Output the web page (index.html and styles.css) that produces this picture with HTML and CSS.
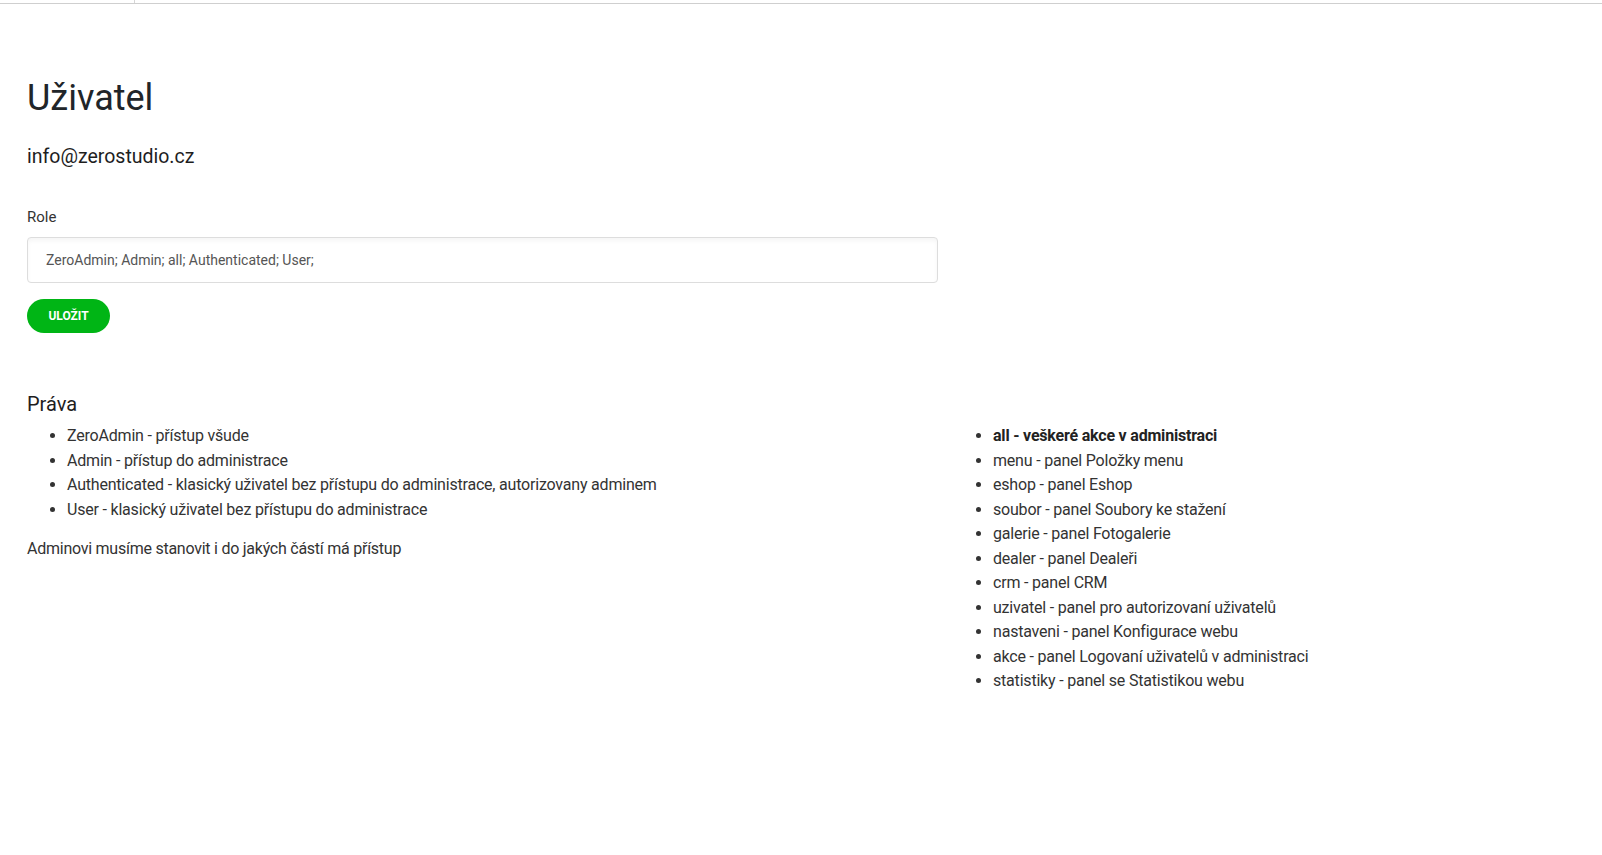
FILE: index.html
```html
<!DOCTYPE html>
<html lang="cs">
<head>
    <meta charset="UTF-8">
    <meta name="viewport" content="width=device-width, initial-scale=1.0">
    <title>Uživatel</title>
    <link rel="stylesheet" href="styles.css">
</head>
<body>
    <div class="topbar">
        <div class="topbar-tab"></div>
    </div>

    <div class="page">
        <h1>Uživatel</h1>
        <h4 class="email">info@zerostudio.cz</h4>

        <form class="user-form">
            <div class="form-group">
                <label for="roles">Role</label>
                <input type="text" id="roles" name="roles" value="ZeroAdmin; Admin; all; Authenticated; User;">
            </div>
            <button type="submit">Uložit</button>
        </form>

        <div class="rights">
            <h3>Práva</h3>
            <div class="rights-left">
                <ul>
                    <li>ZeroAdmin - přístup všude</li>
                    <li>Admin - přístup do administrace</li>
                    <li>Authenticated - klasický uživatel bez přístupu do administrace, autorizovany adminem</li>
                    <li>User - klasický uživatel bez přístupu do administrace</li>
                </ul>
                <p>Adminovi musíme stanovit i do jakých částí má přístup</p>
            </div>
            <ul class="rights-right">
                <li><strong>all - veškeré akce v administraci</strong></li>
                <li>menu - panel Položky menu</li>
                <li>eshop - panel Eshop</li>
                <li>soubor - panel Soubory ke stažení</li>
                <li>galerie - panel Fotogalerie</li>
                <li>dealer - panel Dealeři</li>
                <li>crm - panel CRM</li>
                <li>uzivatel - panel pro autorizovaní uživatelů</li>
                <li>nastaveni - panel Konfigurace webu</li>
                <li>akce - panel Logovaní uživatelů v administraci</li>
                <li>statistiky - panel se Statistikou webu</li>
            </ul>
        </div>
    </div>
</body>
</html>
```

FILE: styles.css
```css
body {
    margin: 0;
    font-family: Roboto, "Noto Sans", sans-serif;
    font-size: 15px;
    color: #333;
    background: #fff;
}
.topbar {
    height: 3px;
    border-bottom: 1px solid #cfcfcf;
}
.topbar-tab {
    width: 134px;
    height: 3px;
    border-right: 1px solid #d6d6d6;
}
.page {
    padding: 0 27px;
}
h1 {
    font-size: 36px;
    font-weight: 400;
    color: #212529;
    margin: 72px 0 0;
    line-height: 44px;
}
.email {
    font-size: 19.5px;
    font-weight: 400;
    color: #1e1e1e;
    margin: 25px 0 0;
    line-height: 24px;
}
.user-form {
    margin-top: 38px;
}
.form-group label {
    display: block;
    line-height: 20px;
    margin-bottom: 10px;
}
input[type="text"] {
    display: block;
    box-sizing: border-box;
    width: 911px;
    height: 46px;
    padding: 0 18px;
    border: 1px solid #ddd;
    border-radius: 4px;
    box-shadow: inset 0 3px 4px rgba(0, 0, 0, 0.04);
    font-family: inherit;
    font-size: 14px;
    color: #555;
}
button {
    margin-top: 16px;
    width: 83px;
    height: 34px;
    border: none;
    border-radius: 17px;
    background-color: #00b515;
    color: #fff;
    font-family: inherit;
    font-size: 12px;
    font-weight: 700;
    text-transform: uppercase;
    cursor: pointer;
}
.rights {
    display: grid;
    grid-template-columns: 911px 1fr;
    column-gap: 15px;
    margin-top: 60px;
}
.rights h3 {
    grid-column: 1;
    margin: 0;
    font-size: 20px;
    font-weight: 400;
    line-height: 23px;
    color: #1e1e1e;
}
.rights-left {
    grid-column: 1;
    grid-row: 2;
}
.rights-right {
    grid-column: 2;
    grid-row: 2;
}
.rights ul {
    margin: 8px 0 0;
    padding-left: 40px;
}
.rights li {
    font-size: 16px;
    line-height: 24.5px;
    letter-spacing: -0.2px;
}
.rights li strong {
    font-weight: 700;
    color: #222;
}
.rights p {
    margin: 15px 0 0;
    font-size: 16px;
    line-height: 24px;
    letter-spacing: -0.25px;
}
```
